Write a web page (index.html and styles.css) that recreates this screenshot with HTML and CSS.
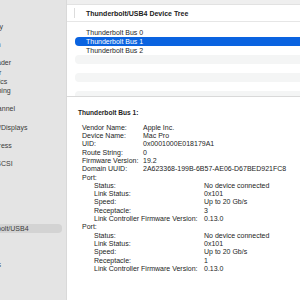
FILE: index.html
```html
<!DOCTYPE html>
<html>
<head>
<meta charset="utf-8">
<link rel="stylesheet" href="styles.css">
</head>
<body>
<div class="window">
  <aside class="sidebar">
    <div class="side-list">
      <div class="side-head">Hardware</div>
      <div class="side-item">ATA</div>
      <div class="side-item">Apple Pay</div>
      <div class="side-item">Audio</div>
      <div class="side-item">Bluetooth</div>
      <div class="side-item">Camera</div>
      <div class="side-item">Card Reader</div>
      <div class="side-item">Controller</div>
      <div class="side-item">Diagnostics</div>
      <div class="side-item">Disc Burning</div>
      <div class="side-item">Ethernet</div>
      <div class="side-item">Fibre Channel</div>
      <div class="side-item">FireWire</div>
      <div class="side-item">Graphics/Displays</div>
      <div class="side-item">Memory</div>
      <div class="side-item">NVMExpress</div>
      <div class="side-item">PCI</div>
      <div class="side-item">Parallel SCSI</div>
      <div class="side-item">Power</div>
      <div class="side-item">Printers</div>
      <div class="side-item">SAS</div>
      <div class="side-item">SATA</div>
      <div class="side-item">SPI</div>
      <div class="side-item">Storage</div>
      <div class="side-item selected">Thunderbolt/USB4</div>
      <div class="side-item">USB</div>
      <div class="side-head">Network</div>
      <div class="side-item">Firewall</div>
      <div class="side-item">Locations</div>
      <div class="side-item">Volumes</div>
      <div class="side-item">WWAN</div>
      <div class="side-item">Wi-Fi</div>
    </div>
  </aside>
  <main class="main">
    <div class="topbar"></div>
    <div class="col-header"><span class="col-sep"></span><span class="col-title">Thunderbolt/USB4 Device Tree</span></div>
    <div class="tree">
      <div class="row">Thunderbolt Bus 0</div>
      <div class="row selected">Thunderbolt Bus 1</div>
      <div class="row">Thunderbolt Bus 2</div>
      <div class="row stripe"></div>
      <div class="row"></div>
      <div class="row stripe"></div>
      <div class="row"></div>
      <div class="row stripe"></div>
    </div>
    <div class="details">
      <div class="title">Thunderbolt Bus 1:</div>
      <div class="props">
        <div>Vendor Name:</div><div>Apple Inc.</div>
        <div>Device Name:</div><div>Mac Pro</div>
        <div>UID:</div><div>0x0001000E018179A1</div>
        <div>Route String:</div><div>0</div>
        <div>Firmware Version:</div><div>19.2</div>
        <div>Domain UUID:</div><div>2A623368-199B-6B57-AE06-D67BED921FC8</div>
        <div class="full">Port:</div>
        <div class="props nested">
          <div>Status:</div><div>No device connected</div>
          <div>Link Status:</div><div>0x101</div>
          <div>Speed:</div><div>Up to 20 Gb/s</div>
          <div>Receptacle:</div><div>3</div>
          <div>Link Controller Firmware Version:</div><div>0.13.0</div>
        </div>
        <div class="full">Port:</div>
        <div class="props nested">
          <div>Status:</div><div>No device connected</div>
          <div>Link Status:</div><div>0x101</div>
          <div>Speed:</div><div>Up to 20 Gb/s</div>
          <div>Receptacle:</div><div>1</div>
          <div>Link Controller Firmware Version:</div><div>0.13.0</div>
        </div>
      </div>
    </div>
  </main>
</div>
</body>
</html>
```
FILE: styles.css
```css
html, body {
  margin: 0;
  padding: 0;
  width: 300px;
  height: 300px;
  overflow: hidden;
  background: #ffffff;
}
body {
  font-family: "Liberation Sans", Arial, sans-serif;
  font-size: 7px;
  color: #262626;
}
.window {
  display: flex;
  width: 300px;
  height: 300px;
}
.sidebar {
  width: 66px;
  flex: none;
  background: #e4e4e4;
  border-right: 1px solid #d9d9d9;
  overflow: hidden;
}
.side-list {
  margin-left: -35px;
  padding-top: 3.2px;
}
.side-item, .side-head {
  height: 9.2px;
  line-height: 9.2px;
  padding-left: 6px;
  margin-right: 4px;
  white-space: nowrap;
  color: #3b3b3b;
  border-radius: 4px;
}
.side-head {
  padding-left: 0;
  color: #8a8a8a;
  font-weight: bold;
}
.side-item.selected {
  background: #d3d3d3;
}
.main {
  flex: 1;
  display: flex;
  flex-direction: column;
  overflow: hidden;
}
.topbar {
  height: 4px;
  background: #efefef;
  border-bottom: 1px solid #e2e2e2;
  flex: none;
}
.col-header {
  height: 16px;
  display: flex;
  align-items: center;
  border-bottom: 1px solid #e6e6e6;
  flex: none;
}
.col-sep {
  width: 1px;
  height: 10px;
  margin-left: 7px;
  background: #dcdcdc;
}
.col-title {
  margin-left: 11px;
  font-weight: bold;
  color: #222222;
  white-space: nowrap;
}
.tree {
  height: 75px;
  padding-top: 6px;
  box-sizing: border-box;
  overflow: hidden;
  flex: none;
  border-bottom: 1px solid #d9d9d9;
}
.row {
  height: 9px;
  line-height: 9px;
  margin-left: 8px;
  margin-right: -10px;
  padding-left: 11px;
  border-radius: 4px;
  white-space: nowrap;
  color: #262626;
}
.row.stripe {
  background: #f4f5f5;
}
.row.selected {
  background: #0a63e0;
  color: #ffffff;
}
.details {
  flex: 1;
  padding: 11.8px 0 0 11px;
  background: #ffffff;
}
.title {
  font-weight: bold;
  font-size: 6.6px;
  line-height: 8.3px;
  color: #1e1e1e;
  margin-bottom: 6.7px;
  white-space: nowrap;
}
.props {
  display: grid;
  grid-template-columns: 61px auto;
  line-height: 8.3px;
  margin-left: 4px;
  white-space: nowrap;
  color: #242424;
}
.props .full {
  grid-column: 1 / -1;
}
.props.nested {
  grid-column: 1 / -1;
  grid-template-columns: 110px auto;
  margin-left: 12px;
}
```
